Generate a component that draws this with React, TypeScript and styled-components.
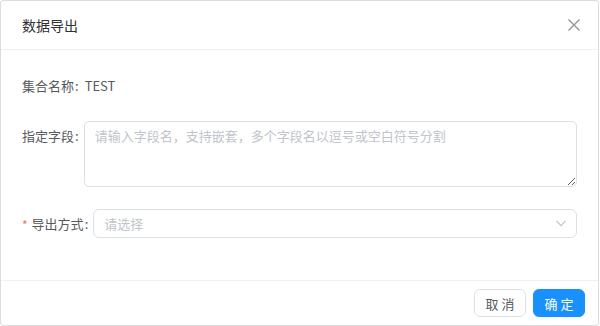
import styled, { createGlobalStyle } from "styled-components";

const GlobalStyle = createGlobalStyle`
  html, body {
    margin: 0;
    padding: 0;
    background: #ffffff;
  }
  * {
    box-sizing: border-box;
  }
`;

const FONT = `"Noto Sans CJK SC", "Noto Sans", "Liberation Sans", sans-serif`;

const Dialog = styled.div`
  width: 599px;
  height: 326px;
  border: 1px solid #dcdcdc;
  border-radius: 3px;
  background: #fff;
  display: flex;
  flex-direction: column;
  font-family: ${FONT};
`;

const Header = styled.div`
  height: 49px;
  flex: none;
  display: flex;
  align-items: center;
  justify-content: space-between;
  padding: 0 17px 0 21px;
  border-bottom: 1px solid #f0f0f0;
`;

const Title = styled.span`
  font-size: 14px;
  color: #303133;
  line-height: 20px;
`;

const CloseButton = styled.button`
  border: 0;
  background: none;
  padding: 0;
  width: 14px;
  height: 14px;
  display: flex;
  align-items: center;
  justify-content: center;
  cursor: pointer;
`;

const Body = styled.div`
  flex: 1;
  padding: 26px 21px 0 21px;
`;

const Row = styled.div<{ $gap: number; $align?: string }>`
  display: flex;
  align-items: ${(p) => p.$align || "center"};
  margin-bottom: ${(p) => p.$gap}px;
`;

const Label = styled.label<{ $top?: number }>`
  flex: none;
  font-size: 13px;
  line-height: 20px;
  color: #555a61;
  margin-right: 5px;
  padding-top: ${(p) => p.$top || 0}px;
  display: flex;
  align-items: center;
`;

const Colon = styled.span`
  margin-left: 1px;
`;

const Required = styled.span`
  color: #f56c6c;
  font-size: 12px;
  margin-right: 4px;
  line-height: 20px;
  position: relative;
  top: 1px;
`;

const Value = styled.span`
  font-size: 13px;
  line-height: 20px;
  color: #555a61;
  margin-left: 1px;
`;

const TextArea = styled.textarea`
  flex: 1;
  height: 66px;
  margin: 0;
  border: 1px solid #dcdfe6;
  border-radius: 5px;
  padding: 4px 10px;
  font-family: ${FONT};
  font-size: 13px;
  line-height: 20px;
  color: #606266;
  resize: vertical;
  outline: none;

  &::placeholder {
    color: #c0c4cc;
  }
`;

const Select = styled.div`
  flex: 1;
  height: 29px;
  border: 1px solid #dcdfe6;
  border-radius: 6px;
  display: flex;
  align-items: center;
  justify-content: space-between;
  padding: 0 10px 0 10px;
  cursor: pointer;
`;

const Placeholder = styled.span`
  font-size: 13px;
  color: #c0c4cc;
  line-height: 20px;
`;

const Footer = styled.div`
  height: 45px;
  flex: none;
  border-top: 1px solid #f0f0f0;
  display: flex;
  align-items: center;
  justify-content: flex-end;
  gap: 7px;
  padding: 0 13px 0 0;
`;

const Button = styled.button<{ $primary?: boolean }>`
  width: 52px;
  height: 28px;
  border-radius: 6px;
  border: 1px solid ${(p) => (p.$primary ? "#1890ff" : "#dcdfe6")};
  background: ${(p) => (p.$primary ? "#1890ff" : "#fff")};
  color: ${(p) => (p.$primary ? "#fff" : "#555a61")};
  font-family: ${FONT};
  font-size: 13px;
  letter-spacing: 3px;
  padding: 0 0 0 3px;
  cursor: pointer;
`;

const App = () => {
  return (
    <>
      <GlobalStyle />
      <Dialog>
        <Header>
          <Title>数据导出</Title>
          <CloseButton aria-label="close">
            <svg width="12" height="12" viewBox="0 0 12 12">
              <path
                d="M0.5 0.5 L11.5 11.5 M11.5 0.5 L0.5 11.5"
                stroke="#909399"
                strokeWidth="1.3"
                fill="none"
              />
            </svg>
          </CloseButton>
        </Header>
        <Body>
          <Row $gap={25}>
            <Label>
              集合名称<Colon>:</Colon>
            </Label>
            <Value>TEST</Value>
          </Row>
          <Row $gap={22} $align="flex-start">
            <Label $top={5}>
              指定字段<Colon>:</Colon>
            </Label>
            <TextArea placeholder="请输入字段名，支持嵌套，多个字段名以逗号或空白符号分割" />
          </Row>
          <Row $gap={0}>
            <Label>
              <Required>*</Required>
              导出方式<Colon>:</Colon>
            </Label>
            <Select>
              <Placeholder>请选择</Placeholder>
              <svg width="10" height="7" viewBox="0 0 10 7">
                <path
                  d="M0.5 1 L5 5.7 L9.5 1"
                  stroke="#c0c4cc"
                  strokeWidth="1.1"
                  fill="none"
                />
              </svg>
            </Select>
          </Row>
        </Body>
        <Footer>
          <Button>取消</Button>
          <Button $primary>确定</Button>
        </Footer>
      </Dialog>
    </>
  );
};

export default App;
